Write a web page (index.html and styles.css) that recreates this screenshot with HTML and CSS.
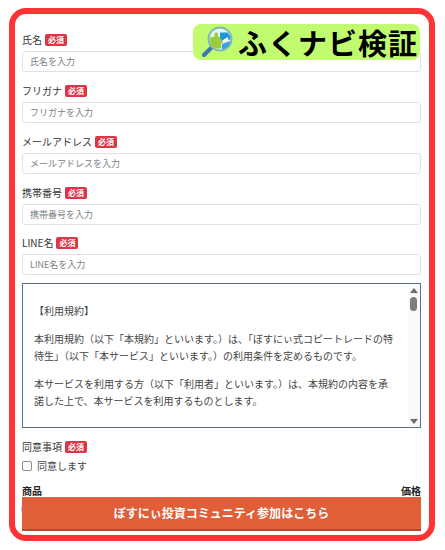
FILE: index.html
```html
<!DOCTYPE html>
<html lang="ja">
<head>
  <meta charset="UTF-8">
  <title>ふくナビ検証</title>
  <meta name="viewport" content="width=device-width, initial-scale=1.0">
  <link rel="stylesheet" href="styles.css">
</head>
<body>
  <div class="frame">
    <div class="form">
      <div class="field">
        <label class="field-label">氏名 <span class="req">必須</span></label>
        <input class="text-input" type="text" placeholder="氏名を入力">
      </div>
      <div class="field">
        <label class="field-label">フリガナ <span class="req">必須</span></label>
        <input class="text-input" type="text" placeholder="フリガナを入力">
      </div>
      <div class="field">
        <label class="field-label">メールアドレス <span class="req">必須</span></label>
        <input class="text-input" type="text" placeholder="メールアドレスを入力">
      </div>
      <div class="field">
        <label class="field-label">携帯番号 <span class="req">必須</span></label>
        <input class="text-input" type="text" placeholder="携帯番号を入力">
      </div>
      <div class="field">
        <label class="field-label">LINE名 <span class="req">必須</span></label>
        <input class="text-input" type="text" placeholder="LINE名を入力">
      </div>

      <div class="terms">
        <div class="terms-text">
          <p>【利用規約】</p>
          <p>本利用規約（以下「本規約」といいます。）は、「ぼすにぃ式コピートレードの特待生」（以下「本サービス」といいます。）の利用条件を定めるものです。</p>
          <p>本サービスを利用する方（以下「利用者」といいます。）は、本規約の内容を承諾した上で、本サービスを利用するものとします。</p>
        </div>
        <div class="scrollbar">
          <span class="arrow-up"></span>
          <span class="thumb"></span>
          <span class="arrow-down"></span>
        </div>
      </div>

      <div class="agree">
        <div class="field-label">同意事項 <span class="req">必須</span></div>
        <label class="agree-check"><span class="checkbox"></span>同意します</label>
      </div>

      <div class="product-head">
        <span>商品</span>
        <span>価格</span>
      </div>
      <div class="product-row"><span class="radio"></span></div>
    </div>

    <div class="badge">
      <svg class="badge-icon" viewBox="0 0 32 32" width="32" height="32">
        <path d="M10.500 21.500L3 29" stroke="#3f76ad" stroke-width="4" stroke-linecap="round"/>
        <circle cx="19" cy="13" r="11.500" fill="#e6f4f2" stroke="#7fb8b8" stroke-width="2"/>
        <path d="M9.500 11h4V8c0-2 3.500-2 3.500 0v3h3v3.500c2 0 2 3.500 0 3.500v4.500h-6.500A10.500 10.500 0 0 1 9.500 11z" fill="#9ccb3b"/>
        <path d="M19 6.500h7.500a10 10 0 0 1 3 7l-8.500 2c0-2-2-2.500-2-4z" fill="#1c9ad6"/>
        <path d="M21 18l8.500-3a10.500 10.500 0 0 1-8.500 8.500z" fill="#35a5d8"/>
        <path d="M21.500 14.500l5-3.500 1 2.500-5 3z" fill="#fff"/>
      </svg>
      <span class="badge-text">ふくナビ検証</span>
    </div>

    <button class="cta" type="button">ぼすにぃ投資コミュニティ参加はこちら</button>
  </div>
</body>
</html>
```

FILE: styles.css
```css
html, body {
  margin: 0;
  padding: 0;
  width: 100%;
  height: 100%;
  overflow: hidden;
  background: #fff;
  font-family: "Noto Sans CJK JP", "Noto Sans", sans-serif;
}

body {
  padding: 8px 10px 9px 9px;
  box-sizing: border-box;
}

.frame {
  position: relative;
  height: 533px;
  box-sizing: border-box;
  border: 6px solid #ff3333;
  border-radius: 17px;
  padding: 19px 8px 0 7px;
  overflow: hidden;
  background: #fff;
  color: #333;
}

.form {
  display: flex;
  flex-direction: column;
}

.field {
  margin-bottom: 12px;
}

.field:nth-child(5) {
  margin-bottom: 8px;
}

.field:nth-child(4) {
  margin-bottom: 11px;
}

.field-label {
  display: flex;
  align-items: center;
  gap: 3px;
  height: 13px;
  margin-bottom: 5px;
  font-size: 10px;
  line-height: 13px;
  color: #333;
}

.req {
  display: inline-block;
  padding: 0 3px;
  background: #dc3545;
  border-radius: 2px;
  color: #fff;
  font-size: 8px;
  font-weight: 700;
  line-height: 12px;
}

.text-input {
  display: block;
  width: 100%;
  height: 21px;
  box-sizing: border-box;
  padding: 0 7px;
  border: 1px solid #dee2e6;
  border-radius: 3px;
  font-family: inherit;
  font-size: 9px;
  background: #fff;
}

.text-input::placeholder {
  color: #7b8188;
  opacity: 1;
}

.terms {
  display: flex;
  height: 145px;
  box-sizing: border-box;
  border: 1px solid #4f7299;
  overflow: hidden;
}

.terms-text {
  flex: 1;
  padding: 18px 13px 0 11px;
  font-size: 10px;
  line-height: 17px;
  color: #444;
}

.terms-text p {
  margin: 0 0 11px;
}

.scrollbar {
  position: relative;
  width: 12px;
  background: #fafafa;
  flex-shrink: 0;
}

.arrow-up, .arrow-down, .thumb {
  position: absolute;
  left: 2px;
}

.arrow-up {
  top: 4px;
  border-left: 4px solid transparent;
  border-right: 4px solid transparent;
  border-bottom: 5px solid #6b6b6b;
}

.arrow-down {
  bottom: 3px;
  border-left: 4px solid transparent;
  border-right: 4px solid transparent;
  border-top: 5px solid #6b6b6b;
}

.thumb {
  top: 13px;
  left: 2px;
  width: 7px;
  height: 14px;
  border-radius: 4px;
  background: #7d7d7d;
}

.agree {
  margin-top: 12px;
}

.agree .field-label {
  margin-bottom: 6px;
}

.agree-check {
  display: flex;
  align-items: center;
  gap: 5px;
  font-size: 10px;
  line-height: 14px;
  color: #444;
}

.checkbox {
  width: 8px;
  height: 8px;
  border: 1px solid #8a8f94;
  border-radius: 2px;
  background: #fff;
}

.product-head {
  display: flex;
  justify-content: space-between;
  margin-top: 11px;
  font-size: 10px;
  font-weight: 700;
  line-height: 14px;
  color: #222;
}

.product-row {
  margin-top: 7px;
}

.radio {
  display: block;
  width: 8px;
  height: 8px;
  margin-left: -1px;
  border-radius: 50%;
  background: #9cc3e6;
}

/* over the form */
.badge {
  position: absolute;
  top: 10px;
  left: 178px;
  width: 227px;
  height: 36px;
  display: flex;
  align-items: center;
  box-sizing: border-box;
  padding-left: 8px;
  background: #c1fb70;
  border-radius: 8px;
}

.badge-icon {
  flex-shrink: 0;
}

.badge-text {
  margin-left: 5px;
  font-size: 29px;
  font-weight: 700;
  letter-spacing: 1px;
  line-height: 36px;
  color: #000;
  white-space: nowrap;
}

.cta {
  position: absolute;
  left: 7px;
  right: 8px;
  top: 483px;
  height: 34px;
  padding: 0 0 2px;
  border: 0;
  border-top: 1px solid #c9694a;
  border-bottom: 2px solid #b04f30;
  background: #e05e38;
  color: #fff;
  font-family: inherit;
  font-size: 12px;
  font-weight: 700;
}
```
